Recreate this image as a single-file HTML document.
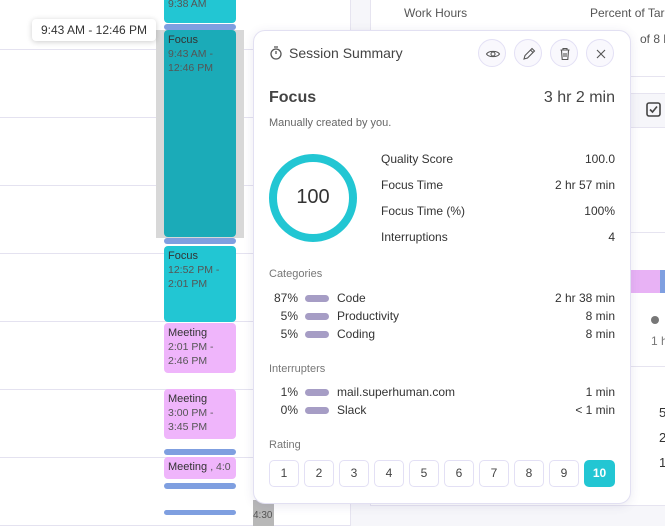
<!DOCTYPE html>
<html><head><meta charset="utf-8"><style>
*{margin:0;padding:0;box-sizing:border-box}
body{width:665px;height:526px;overflow:hidden;background:#fff;font-family:"Liberation Sans",sans-serif;position:relative;color:#333}
.a{position:absolute}
.hl{position:absolute;left:0;width:350px;height:1px;background:#e4e2f0}
.ev{position:absolute;left:164px;width:72px;border-radius:4px;font-size:11px;padding:3px 4px;line-height:14px;color:#333;overflow:hidden;white-space:nowrap}
.ev span{color:#555;font-size:10.5px}
.bar{position:absolute;left:164px;width:72px;height:6px;border-radius:3px;background:#7f9fe0}
.btn{position:absolute;top:39px;width:28px;height:28px;border-radius:50%;border:1px solid #e3e0f5;background:#f9f8fd}
.btn svg{position:absolute;left:6px;top:6px}
.t{position:absolute;font-size:13px;color:#333;white-space:nowrap}
.r{text-align:right}
.sw{position:absolute;left:305px;width:24px;height:7px;border-radius:4px;background:#a69dc5}
.rb{position:absolute;top:460px;width:30px;height:27px;border:1px solid #e3e0f5;border-radius:5px;font-size:12px;text-align:center;line-height:25px;color:#444}
.lbl{position:absolute;left:269px;font-size:11px;color:#777}
</style></head><body>
<div class="hl" style="top:49px"></div><div class="hl" style="top:117px"></div><div class="hl" style="top:185px"></div><div class="hl" style="top:253px"></div><div class="hl" style="top:321px"></div><div class="hl" style="top:389px"></div><div class="hl" style="top:457px"></div><div class="hl" style="top:525px"></div>
<div class="a" style="left:350px;top:0;width:315px;height:526px;background:#f6f6fa;border-left:1px solid #e6e4f0"></div>
<div class="a" style="left:370px;top:-1px;width:300px;height:507px;background:#fff;border:1px solid #e6e4f0"></div>
<div class="t" style="left:404px;top:6px;font-size:12px;color:#555">Work Hours</div>
<div class="t" style="left:590px;top:6px;font-size:12px;color:#555">Percent of Targ</div>
<div class="t" style="left:640px;top:32px;font-size:12px;color:#555">of 8 h</div>
<div class="a" style="left:620px;top:76px;width:45px;height:1px;background:#e6e4f0"></div>
<div class="a" style="left:620px;top:93px;width:45px;height:35px;background:#f6f6fa;border-top:1px solid #e6e4f0;border-bottom:1px solid #e6e4f0"></div>
<svg class="a" style="left:646px;top:102px" width="15" height="15" viewBox="0 0 15 15"><rect x="1" y="1" width="13" height="13" rx="2" fill="none" stroke="#444" stroke-width="1.6"/><path d="M4 7.5l2.5 2.5L11 4.5" fill="none" stroke="#444" stroke-width="1.6"/></svg>
<div class="a" style="left:620px;top:232px;width:45px;height:1px;background:#e6e4f0"></div>
<div class="a" style="left:631px;top:270px;width:29px;height:23px;background:#e8b2f5"></div>
<div class="a" style="left:660px;top:270px;width:5px;height:23px;background:#7f9fe0"></div>
<div class="a" style="left:651px;top:316px;width:8px;height:8px;border-radius:50%;background:#777"></div>
<div class="t" style="left:651px;top:334px;font-size:12px;color:#777">1 h</div>
<div class="a" style="left:620px;top:366px;width:45px;height:1px;background:#e6e4f0"></div>
<div class="t" style="left:659px;top:405px">5</div><div class="t" style="left:659px;top:430px">2</div><div class="t" style="left:659px;top:455px">1</div>
<div class="a" style="left:156px;top:30px;width:88px;height:208px;background:#d8d8d8"></div>
<div class="ev" style="top:-20px;height:43px;background:#22c6d3"><br><span>9:38 AM</span></div>
<div class="bar" style="top:24px"></div>
<div class="ev" style="top:30px;height:207px;background:#1babb8">Focus<br><span>9:43 AM -<br>12:46 PM</span></div>
<div class="bar" style="top:238px"></div>
<div class="ev" style="top:246px;height:76px;background:#22c6d3">Focus<br><span>12:52 PM -<br>2:01 PM</span></div>
<div class="ev" style="top:323px;height:50px;background:#efb5fb">Meeting<br><span>2:01 PM -<br>2:46 PM</span></div>
<div class="ev" style="top:389px;height:50px;background:#efb5fb">Meeting<br><span>3:00 PM -<br>3:45 PM</span></div>
<div class="bar" style="top:449px"></div>
<div class="ev" style="top:457px;height:22px;background:#efb5fb">Meeting <span>, 4:0</span></div>
<div class="bar" style="top:483px"></div>
<div class="bar" style="top:510px;height:5px"></div>
<div class="a" style="left:253px;top:500px;width:21px;height:26px;background:#b8b8b8;font-size:10px;color:#555;padding-top:10px">4:30</div>
<div class="a" style="left:32px;top:19px;width:124px;height:22px;background:#fff;border-radius:4px;box-shadow:0 1px 6px rgba(0,0,0,.2);font-size:12px;line-height:22px;text-align:center;color:#333">9:43 AM - 12:46 PM</div>
<div class="a" style="left:253px;top:30px;width:378px;height:474px;background:#fff;border:1px solid #e2e0f2;border-radius:12px;box-shadow:0 2px 10px rgba(80,70,140,.12)"></div>
<svg class="a" style="left:269px;top:45px" width="14" height="16" viewBox="0 0 14 16"><circle cx="7" cy="9" r="5" fill="none" stroke="#555" stroke-width="1.3"/><path d="M5 2h4M7 9V6" stroke="#555" stroke-width="1.3" fill="none"/></svg>
<div class="t" style="left:289px;top:45px;font-size:14px;color:#444">Session Summary</div>
<div class="btn" style="left:478px"><svg width="16" height="16" viewBox="0 0 16 16"><path d="M1.5 8C3.5 4.5 12.5 4.5 14.5 8C12.5 11.5 3.5 11.5 1.5 8Z" fill="none" stroke="#555" stroke-width="1.1"/><circle cx="8" cy="8" r="2" fill="none" stroke="#555" stroke-width="1.1"/></svg></div>
<div class="btn" style="left:514px"><svg width="16" height="16" viewBox="0 0 16 16"><path d="M3 13L4 9.5L11 2.5L13.5 5L6.5 12Z M9.5 4L12 6.5" fill="none" stroke="#555" stroke-width="1.1"/></svg></div>
<div class="btn" style="left:550px"><svg width="16" height="16" viewBox="0 0 16 16"><path d="M3.5 4h9M6 4V2.5h4V4M4.5 4.5l.7 9h5.6l.7-9M7 7v4M9 7v4" fill="none" stroke="#555" stroke-width="1.1"/></svg></div>
<div class="btn" style="left:586px"><svg width="16" height="16" viewBox="0 0 16 16"><path d="M4 4l8 8M12 4l-8 8" stroke="#555" stroke-width="1.1"/></svg></div>
<div class="t" style="left:269px;top:89px;font-size:16px;font-weight:bold;color:#444">Focus</div>
<div class="t r" style="left:500px;width:115px;top:89px;font-size:16px;color:#444">3 hr 2 min</div>
<div class="t" style="left:269px;top:117px;font-size:11px;color:#666">Manually created by you.</div>
<div class="a" style="left:269px;top:154px;width:88px;height:88px;border-radius:50%;border:8px solid #22c6d3"></div>
<div class="t" style="left:269px;top:186px;width:88px;text-align:center;font-size:20px;color:#333">100</div>
<div class="t" style="left:381px;top:152px;font-size:12px">Quality Score</div><div class="t r" style="left:500px;width:115px;top:152px;font-size:12px">100.0</div>
<div class="t" style="left:381px;top:178px;font-size:12px">Focus Time</div><div class="t r" style="left:500px;width:115px;top:178px;font-size:12px">2 hr 57 min</div>
<div class="t" style="left:381px;top:204px;font-size:12px">Focus Time (%)</div><div class="t r" style="left:500px;width:115px;top:204px;font-size:12px">100%</div>
<div class="t" style="left:381px;top:230px;font-size:12px">Interruptions</div><div class="t r" style="left:500px;width:115px;top:230px;font-size:12px">4</div>
<div class="lbl" style="top:268px">Categories</div>
<div class="t r" style="left:260px;width:38px;top:291px;font-size:12px">87%</div><div class="sw" style="top:295px"></div><div class="t" style="left:337px;top:291px;font-size:12px">Code</div><div class="t r" style="left:500px;width:115px;top:291px;font-size:12px">2 hr 38 min</div>
<div class="t r" style="left:260px;width:38px;top:309px;font-size:12px">5%</div><div class="sw" style="top:313px"></div><div class="t" style="left:337px;top:309px;font-size:12px">Productivity</div><div class="t r" style="left:500px;width:115px;top:309px;font-size:12px">8 min</div>
<div class="t r" style="left:260px;width:38px;top:327px;font-size:12px">5%</div><div class="sw" style="top:331px"></div><div class="t" style="left:337px;top:327px;font-size:12px">Coding</div><div class="t r" style="left:500px;width:115px;top:327px;font-size:12px">8 min</div>
<div class="lbl" style="top:363px">Interrupters</div>
<div class="t r" style="left:260px;width:38px;top:385px;font-size:12px">1%</div><div class="sw" style="top:389px"></div><div class="t" style="left:337px;top:385px;font-size:12px">mail.superhuman.com</div><div class="t r" style="left:500px;width:115px;top:385px;font-size:12px">1 min</div>
<div class="t r" style="left:260px;width:38px;top:403px;font-size:12px">0%</div><div class="sw" style="top:407px"></div><div class="t" style="left:337px;top:403px;font-size:12px">Slack</div><div class="t r" style="left:500px;width:115px;top:403px;font-size:12px">&lt; 1 min</div>
<div class="lbl" style="top:439px">Rating</div>
<div class="rb" style="left:269px">1</div><div class="rb" style="left:304px">2</div><div class="rb" style="left:339px">3</div><div class="rb" style="left:374px">4</div><div class="rb" style="left:409px">5</div><div class="rb" style="left:444px">6</div><div class="rb" style="left:479px">7</div><div class="rb" style="left:514px">8</div><div class="rb" style="left:549px">9</div>
<div class="rb" style="left:584px;width:31px;background:#22c6d3;border-color:#22c6d3;color:#fff;font-weight:bold">10</div>
</body></html>
